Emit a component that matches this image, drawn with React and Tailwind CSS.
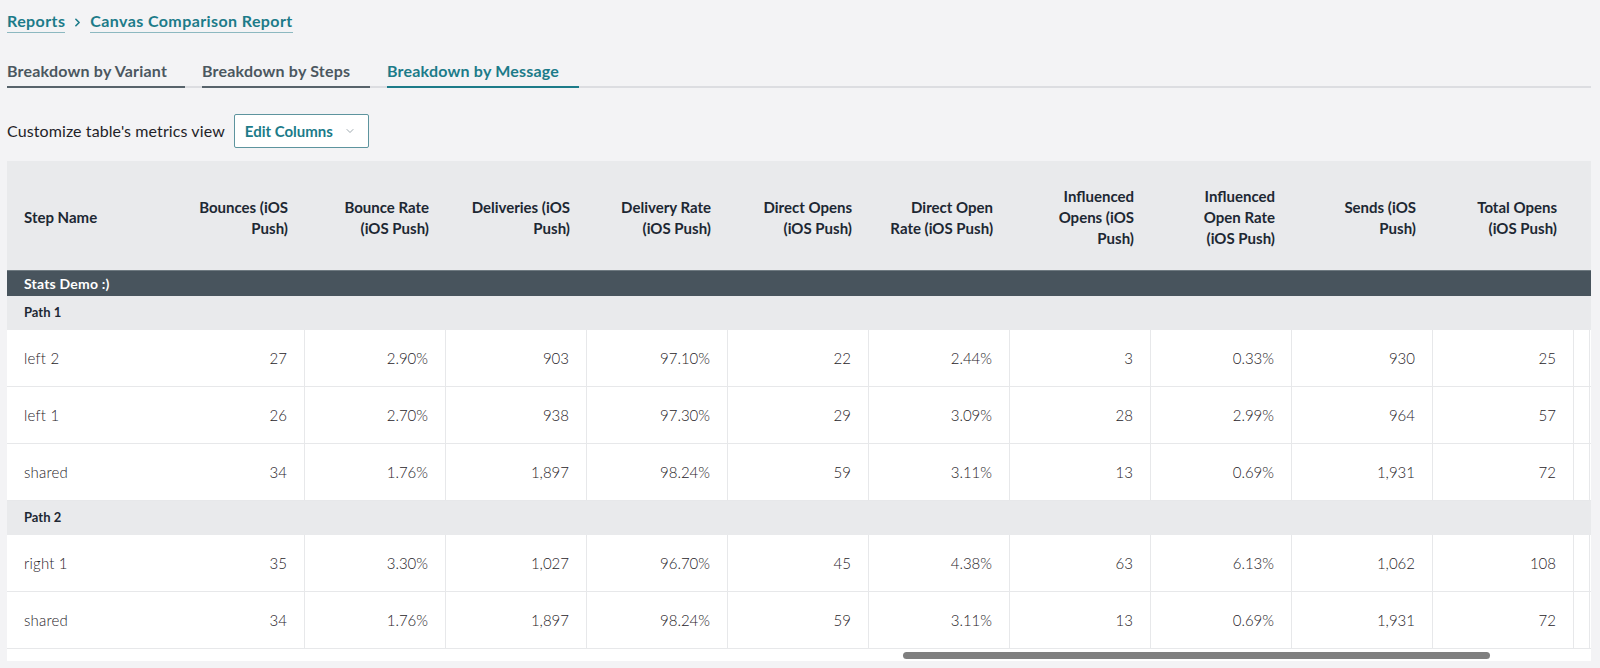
import React from "react";
import { ChevronRight, ChevronDown } from "lucide-react";

const columns = [
  ["Bounces (iOS", "Push)"],
  ["Bounce Rate", "(iOS Push)"],
  ["Deliveries (iOS", "Push)"],
  ["Delivery Rate", "(iOS Push)"],
  ["Direct Opens", "(iOS Push)"],
  ["Direct Open", "Rate (iOS Push)"],
  ["Influenced", "Opens (iOS", "Push)"],
  ["Influenced", "Open Rate", "(iOS Push)"],
  ["Sends (iOS", "Push)"],
  ["Total Opens", "(iOS Push)"],
];

const groups = [
  {
    name: "Path 1",
    rows: [
      ["left 2", "27", "2.90%", "903", "97.10%", "22", "2.44%", "3", "0.33%", "930", "25"],
      ["left 1", "26", "2.70%", "938", "97.30%", "29", "3.09%", "28", "2.99%", "964", "57"],
      ["shared", "34", "1.76%", "1,897", "98.24%", "59", "3.11%", "13", "0.69%", "1,931", "72"],
    ],
  },
  {
    name: "Path 2",
    rows: [
      ["right 1", "35", "3.30%", "1,027", "96.70%", "45", "4.38%", "63", "6.13%", "1,062", "108"],
      ["shared", "34", "1.76%", "1,897", "98.24%", "59", "3.11%", "13", "0.69%", "1,931", "72"],
    ],
  },
];

const tabs = [
  { label: "Breakdown by Variant", width: "w-[178px]" },
  { label: "Breakdown by Steps", width: "w-[168px]" },
  { label: "Breakdown by Message", width: "w-[192px]", active: true },
];

function DataRow({ row }) {
  return (
    <div className="flex h-[57px] border-b border-[#e7e8ea] bg-white">
      <div className="w-[157px] shrink-0 flex items-center pl-[17px] text-[15px] font-light tracking-[0.2px] text-[#1f2328]">
        {row[0]}
      </div>
      {row.slice(1).map((v, i) => (
        <div
          key={i}
          className="w-[141px] shrink-0 flex items-center justify-end pr-[17px] border-r border-[#e7e8ea] text-[15px] font-light text-[#1f2328]"
        >
          {v}
        </div>
      ))}
      <div className="w-[16px] shrink-0 border-r border-[#e7e8ea]" />
    </div>
  );
}

export default function App() {
  return (
    <div
      className="min-h-[668px] bg-[#f3f3f5] pl-[7px] pr-[9px]"
      style={{ fontFamily: "Lato, 'Noto Sans', sans-serif" }}
    >
      {/* Breadcrumb */}
      <div className="flex items-center pt-[11px] text-[16px] font-bold tracking-[0.4px] text-[#1c7b89]">
        <span className="leading-5 pb-px border-b border-[#8cb8c0]">Reports</span>
        <ChevronRight size={13} strokeWidth={3} className="mx-[6px] text-[#1c7b89]" />
        <span className="leading-5 pb-px border-b border-[#8cb8c0]">Canvas Comparison Report</span>
      </div>

      {/* Tabs */}
      <div className="mt-[28px] flex gap-[17px] border-b-2 border-[#dcdde1]">
        {tabs.map((t) => (
          <div
            key={t.label}
            className={`${t.width} -mb-[2px] pb-[5px] leading-5 text-[16px] font-bold tracking-[0.2px] border-b-2 ${
              t.active ? "border-[#1c7b89] text-[#1c7b89]" : "border-[#57636b] text-[#4b5760]"
            }`}
          >
            {t.label}
          </div>
        ))}
      </div>

      {/* Metrics view */}
      <div className="mt-[26px] flex items-center gap-[9px]">
        <span className="text-[16px] tracking-[0.1px] text-[#1f2328]">Customize table's metrics view</span>
        <button className="h-[34px] w-[135px] flex items-center justify-between pl-[10px] pr-[12px] bg-white border border-[#5d949e] rounded-[2px] text-[15px] font-bold text-[#1c7b89]">
          Edit Columns
          <ChevronDown size={12} strokeWidth={1.5} className="text-[#7d8c94]" />
        </button>
      </div>

      {/* Table */}
      <div className="mt-[13px] w-[1584px] bg-white overflow-hidden">
        <div className="flex h-[109px] pt-[4px] bg-[#e9eaec] text-[15px] font-bold leading-[21px] text-[#1d2833]">
          <div className="w-[157px] shrink-0 flex items-center pl-[17px]">Step Name</div>
          {columns.map((lines, i) => (
            <div key={i} className="w-[141px] shrink-0 flex flex-col justify-center items-end pr-[17px] text-right">
              {lines.map((l) => (
                <span key={l}>{l}</span>
              ))}
            </div>
          ))}
        </div>

        <div className="h-[26px] flex items-center pl-[17px] bg-[#48545d] border-t border-[#6f7a81] text-[14px] font-bold tracking-[0.2px] text-white">
          Stats Demo :)
        </div>

        {groups.map((g) => (
          <div key={g.name}>
            <div className="h-[34px] flex items-center pl-[17px] bg-[#e9eaec] text-[13px] font-bold text-[#1d2833]">
              {g.name}
            </div>
            {g.rows.map((r, i) => (
              <DataRow key={i} row={r} />
            ))}
          </div>
        ))}

        {/* Scrollbar */}
        <div className="h-[12px] flex items-center">
          <div className="ml-[896px] w-[587px] h-[7px] rounded-full bg-[#7f7f7f]" />
        </div>
      </div>
    </div>
  );
}
